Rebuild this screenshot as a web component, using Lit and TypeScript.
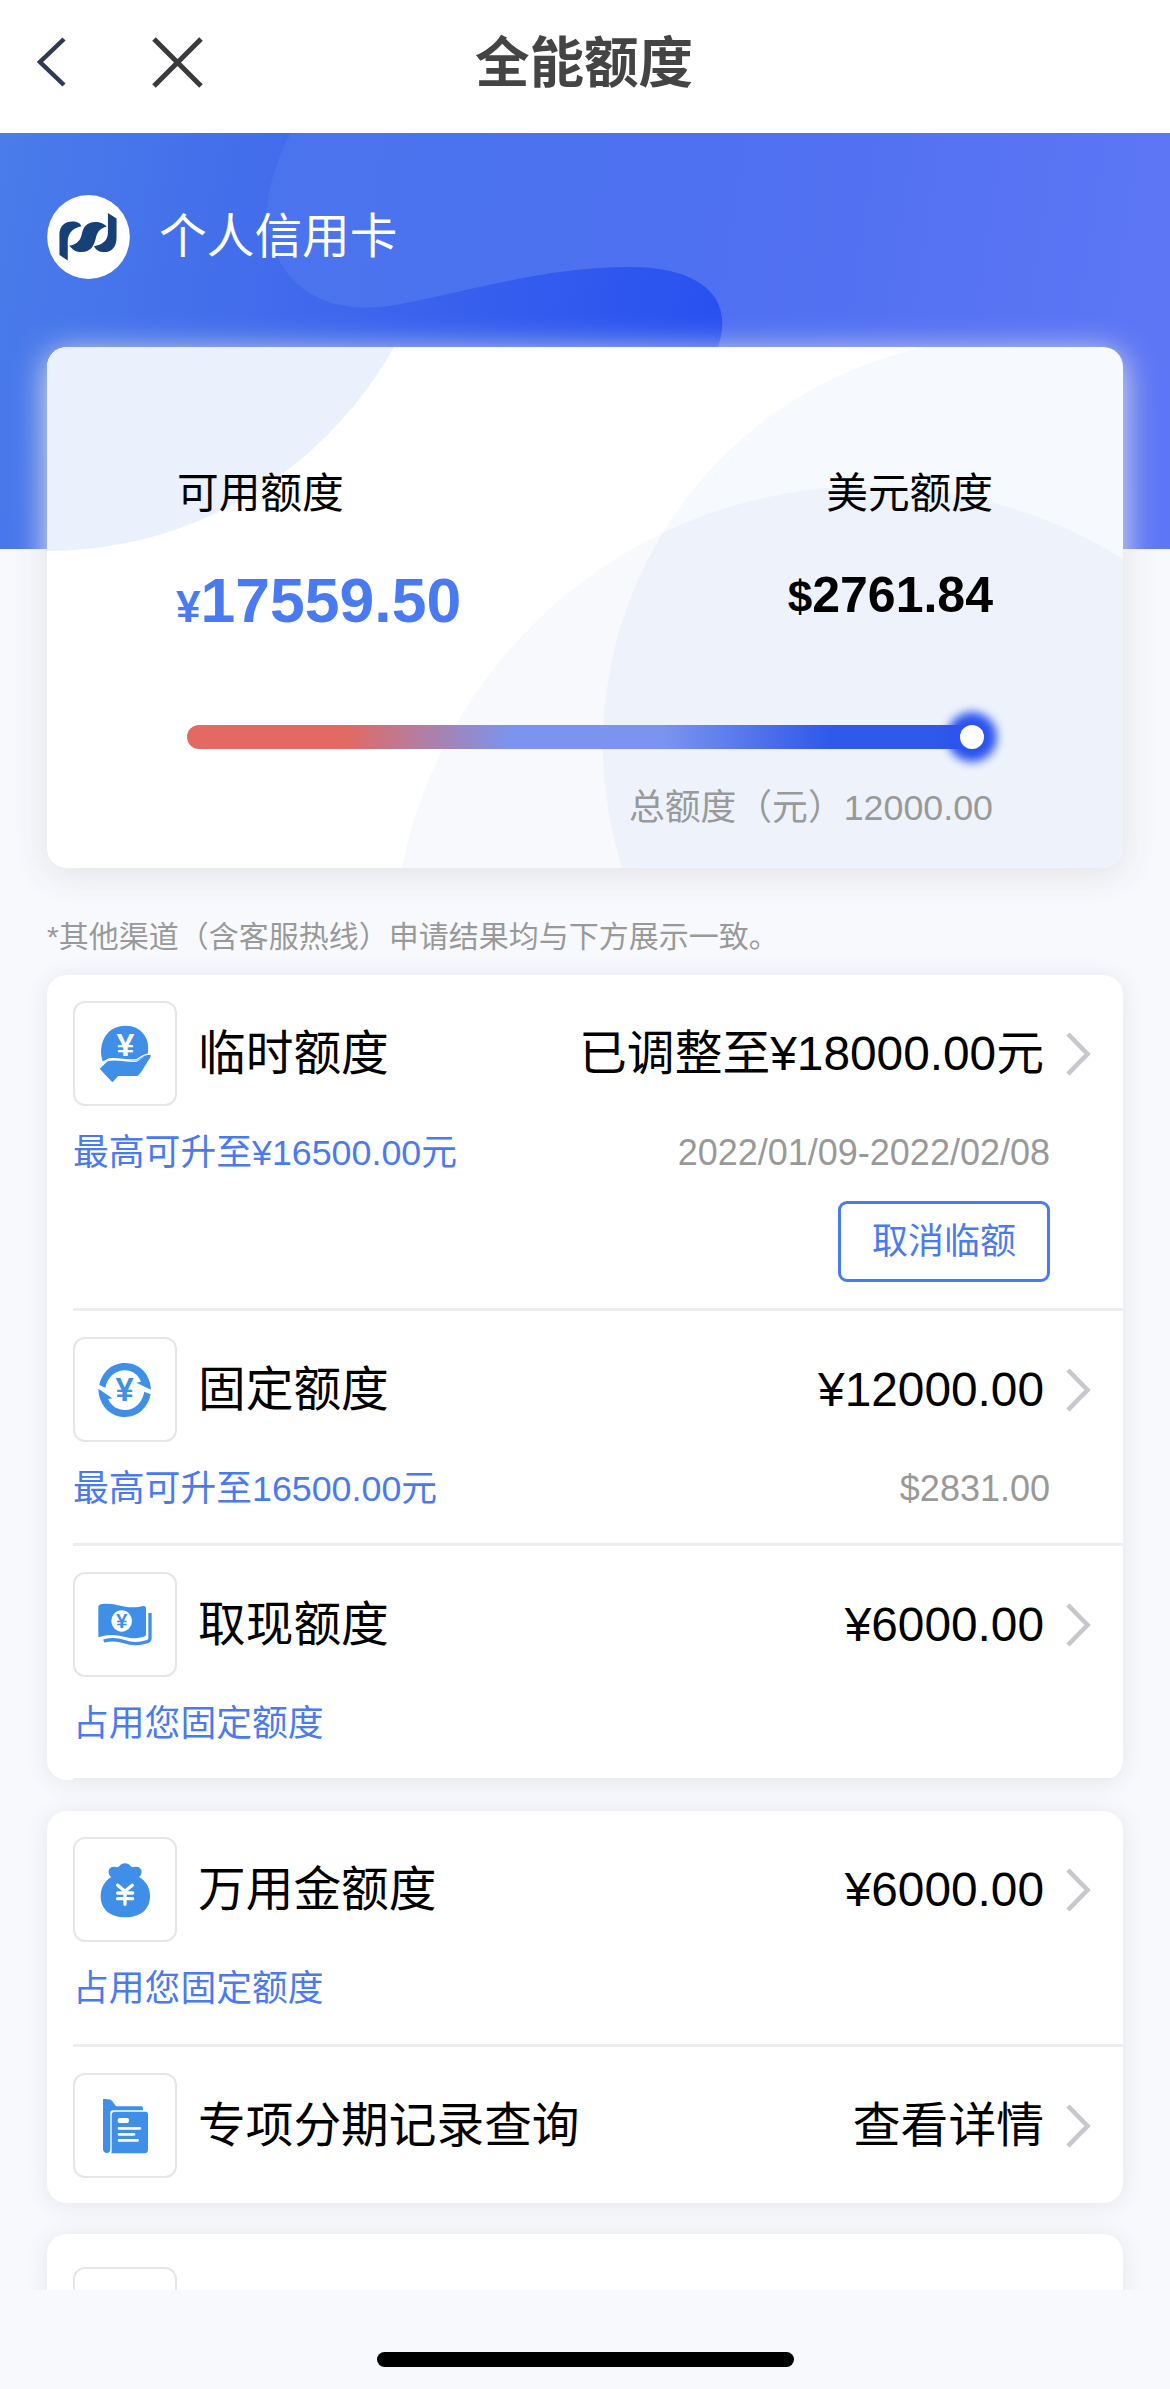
import { LitElement, html, css, svg, nothing } from "lit";
import { customElement, property } from "lit/decorators.js";

const BLUE = "#3f8fe8";

const yen = (x: number, y: number, size: number, fill: string) => svg`
  <text x=${x} y=${y} font-size=${size} font-weight="700" fill=${fill} text-anchor="middle"
    font-family="'Liberation Sans', Arial, sans-serif">¥</text>`;

const icons: Record<string, unknown> = {
  hand: html`<svg viewBox="0 -4 240 240" width="80" height="80">
    <path fill=${BLUE} d="M54 140C36 90 62 31 121 31C171 31 194 71 189 106C189 113 187 119 184 121C172 120 166 136 150 136C120 136 90 126 70 133C65 135 60 140 54 140Z"/>
    <path fill=${BLUE} d="M44 160C52 155 60 144 68 138C90 132 120 140 148 140C165 140 172 122 184 120L197 118C199 125 190 135 186 142C176 156 168 174 157 182L100 182L82 201Z"/>
    <path fill="none" stroke="#fff" stroke-width="4" stroke-linecap="round" d="M53 139C62 140 64 131 78 130C105 129 140 138 156 132C168 127 172 119 186 117"/>
    ${yen(121, 121, 96, "#fff")}
  </svg>`,
  cycle: html`<svg viewBox="0 0 240 240" width="80" height="80">
    <path fill=${BLUE} d="M43 105C51 67 80 39 120 39C163 39 196 72 198 119L154 98L168 95C159 73 142 61 120 61C91 61 67 82 61 113Z"/>
    <path fill=${BLUE} d="M197 133C189 172 160 201 120 201C77 201 41 166 40 116L82 145L69 147C79 168 97 180 120 180C150 180 172 157 178 125Z"/>
    ${yen(119, 154, 98, BLUE)}
  </svg>`,
  cash: html`<svg viewBox="0 702 240 240" width="80" height="80">
    <path fill=${BLUE} d="M40 768C40 762 46 760 53 759C90 755 110 769 140 769C155 769 165 767 175 765C180 764 183 767 183 772V850C183 854 181 856 177 857C160 861 142 864 125 859C105 853 80 849 57 854L40 859Z"/>
    <path fill="none" stroke=${BLUE} stroke-width="10" stroke-linejoin="round" d="M195 786V862C195 868 192 870 187 872C165 879 140 880 118 872C98 865 78 864 56 870"/>
    <ellipse cx="110" cy="810" rx="31" ry="32" fill="#fff"/>
    ${yen(110, 832, 62, BLUE)}
  </svg>`,
  bag: html`<svg viewBox="0 -1 240 240" width="80" height="80">
    <path fill=${BLUE} d="M79 80C66 70 68 47 89 49C96 50 99 52 103 48C109 36 131 36 137 48C141 52 145 50 151 49C172 47 175 70 162 80C182 91 195 112 195 137C195 177 167 201 121 201C75 201 47 177 47 137C47 112 60 91 79 80Z"/>
    <path fill="none" stroke="#fff" stroke-width="10" stroke-linecap="round" stroke-linejoin="round" d="M98 105L120 123L142 105M120 123V162M98 128H143M98 145H143"/>
  </svg>`,
  file: html`<svg viewBox="0 704 240 240" width="80" height="80">
    <path fill=${BLUE} d="M54 744C65 742 77 744 82 750L93 765H170C173 765 174 768 174 777H84C79 777 76 780 76 785V892C76 901 72 905 66 905C58 905 54 900 54 893Z"/>
    <path fill=${BLUE} d="M80 792C80 784 84 781 90 781H182C187 781 189 784 189 789V896C189 902 185 906 179 906H79Q81 901 80 892Z"/>
    <path fill="none" stroke="#fff" stroke-width="8" stroke-linecap="round" d="M102 831H165M102 849H147M102 867H158"/>
    <rect x="98" y="800" width="34" height="15" rx="6" fill="#fff"/>
  </svg>`,
};

interface Row {
  icon?: string;
  label?: string;
  value?: string;
  hint?: string;
  note?: string;
  action?: string;
}

const groups: Row[][] = [
  [
    {
      icon: "hand",
      label: "临时额度",
      value: "已调整至¥18000.00元",
      hint: "最高可升至¥16500.00元",
      note: "2022/01/09-2022/02/08",
      action: "取消临额",
    },
    { icon: "cycle", label: "固定额度", value: "¥12000.00", hint: "最高可升至16500.00元", note: "$2831.00" },
    { icon: "cash", label: "取现额度", value: "¥6000.00", hint: "占用您固定额度" },
  ],
  [
    { icon: "bag", label: "万用金额度", value: "¥6000.00", hint: "占用您固定额度" },
    { icon: "file", label: "专项分期记录查询", value: "查看详情" },
  ],
];

@customElement("limit-row")
class LimitRow extends LitElement {
  @property({ attribute: false }) row: Row = {};

  static styles = css`
    :host {
      display: block;
      margin-left: 26px;
      padding-top: 26px;
      box-sizing: border-box;
    }
    .main {
      display: flex;
      align-items: center;
      height: 105px;
      padding-right: 29px;
    }
    .icon {
      box-sizing: border-box;
      width: 104px;
      height: 105px;
      flex: none;
      border: 2px solid #e6e6e8;
      border-radius: 12px;
      display: flex;
      align-items: center;
      justify-content: center;
    }
    .icon svg {
      display: block;
    }
    .label {
      margin-left: 21px;
      padding-top: 1px;
      font-size: 47.7px;
      line-height: 60px;
      flex: 1;
      white-space: nowrap;
    }
    .value {
      font-size: 47.8px;
      line-height: 60px;
      padding-top: 1px;
      white-space: nowrap;
      margin-right: 18px;
    }
    .chevron {
      display: block;
      flex: none;
    }
    .sub {
      display: flex;
      justify-content: space-between;
      padding-right: 73px;
      margin-top: 22px;
      height: 50px;
      line-height: 50px;
      font-size: 35.8px;
      white-space: nowrap;
    }
    .hint {
      color: #4a7af0;
    }
    .note {
      color: #999;
      font-size: 36px;
    }
    .action {
      display: flex;
      justify-content: flex-end;
      padding-right: 73px;
      margin-top: 23px;
    }
    .button {
      box-sizing: border-box;
      width: 212px;
      height: 81px;
      border: 3px solid #4a7af0;
      border-radius: 9px;
      color: #4a7af0;
      font-size: 36px;
      line-height: 75px;
      text-align: center;
    }
  `;

  render() {
    const r = this.row;
    return html`
      <div class="main">
        <div class="icon">${r.icon ? icons[r.icon] : nothing}</div>
        ${r.label
          ? html`<div class="label">${r.label}</div>
              <div class="value">${r.value}</div>
              <svg class="chevron" width="32" height="50" viewBox="0 0 32 50">
                <path d="M6 5L25.500 25L6 45" fill="none" stroke="#c7c7cc" stroke-width="4.600" />
              </svg>`
          : nothing}
      </div>
      ${r.hint
        ? html`<div class="sub"><span class="hint">${r.hint}</span><span class="note">${r.note ?? nothing}</span></div>`
        : nothing}
      ${r.action ? html`<div class="action"><div class="button">${r.action}</div></div>` : nothing}
    `;
  }
}

@customElement("app-root")
class AppRoot extends LitElement {
  static styles = css`
    :host {
      display: block;
      width: 1170px;
      height: 2389px;
      overflow: hidden;
      background: #f8f9fd;
      color: #000;
      font-family: "Liberation Sans", "Noto Sans CJK SC", sans-serif;
    }
    .nav {
      display: grid;
      grid-template-columns: 240px 1fr 240px;
      height: 133px;
      background: #fff;
      padding-bottom: 9px;
      box-sizing: border-box;
      align-items: center;
    }
    .nav svg {
      display: block;
    }
    .title {
      text-align: center;
      font-size: 54.5px;
      line-height: 80px;
      padding-top: 3px;
      margin-right: 2px;
      font-weight: 700;
      color: #444;
    }
    .scroll {
      height: 2157px;
      overflow: hidden;
    }
    .banner {
      height: 416px;
      position: relative;
    }
    .art {
      position: absolute;
      inset: 0;
    }
    .user {
      position: relative;
      display: flex;
      align-items: center;
      gap: 29px;
      padding: 62px 0 0 47px;
      color: #fff;
      font-size: 47.7px;
      line-height: 84px;
    }
    .user svg {
      display: block;
    }
    .card {
      position: relative;
      margin: -202px 47px 0;
      height: 521px;
      border-radius: 20px;
      box-shadow: 0 6px 32px 2px rgba(226, 227, 231, 0.97);
      background: #fff;
      overflow: hidden;
      box-sizing: border-box;
      padding: 120px 130px 0;
    }
    .cardbg {
      position: absolute;
      left: 0;
      top: 0;
    }
    .body {
      position: relative;
    }
    .heads,
    .amounts {
      display: flex;
      justify-content: space-between;
    }
    .heads {
      font-size: 41.7px;
      line-height: 54px;
    }
    .amounts {
      font-weight: 700;
      height: 100px;
      margin-top: 29px;
      line-height: 100px;
    }
    .cny {
      color: #4a7af0;
      font-size: 62.5px;
      margin-left: -1px;
    }
    .cny small {
      font-size: 44px;
    }
    .usd {
      font-size: 50px;
      line-height: 90px;
    }
    .usd small {
      font-size: 44px;
    }
    .track {
      margin: 75px 13px 0 10px;
      height: 24px;
      border-radius: 12px;
      background: linear-gradient(90deg, #e26a62 20%, #7b94ef 41%, #7b94ef 60%, #3058ea 81%);
      display: flex;
      justify-content: flex-end;
    }
    .dot {
      width: 24px;
      height: 24px;
      border-radius: 50%;
      background: #fff;
      margin-right: -4px;
      box-shadow: 0 0 10px 13px #2c54ee;
    }
    .total {
      margin-top: 34px;
      font-size: 35.8px;
      line-height: 50px;
      text-align: right;
      color: #999;
    }
    .tip {
      margin: 48px 47px 0;
      height: 59px;
      line-height: 42px;
      font-size: 30px;
      color: #999;
      white-space: nowrap;
    }
    .group {
      margin: 0 47px 31px;
      border-radius: 20px;
      background: #fff;
      box-shadow: 0 2px 22px #e4e5ea;
    }
    .row {
      height: 235px;
    }
    .row.tall {
      height: 333px;
    }
    .row.brief {
      height: 233px;
    }
    .row.short {
      height: 159px;
    }
    .row + .row::before {
      content: "";
      display: block;
      height: 3px;
      margin-left: 26px;
      background: #ededef;
    }
    .group.ruled {
      padding-bottom: 2px;
      background: linear-gradient(#ededf0, #ededf0) 26px 100% / 1050px 2px no-repeat #fff;
    }
    .peek {
      padding-top: 7px;
    }
    .foot {
      display: flex;
      justify-content: center;
      padding-top: 62px;
    }
    .bar {
      width: 417px;
      height: 15px;
      border-radius: 8px;
      background: #000;
    }
  `;

  private rowClass(r: Row, groupIndex: number) {
    if (r.action) return "row tall";
    if (!r.hint) return "row short";
    return groupIndex === 0 ? "row" : "row brief";
  }

  render() {
    return html`
      <div class="nav">
        <svg width="240" height="124" viewBox="0 0 240 124">
          <path d="M64 39L40 62L64 85" fill="none" stroke="#2f3a52" stroke-width="4.500" />
          <path d="M154 39L201 86M201 39L154 86" fill="none" stroke="#3a3a3c" stroke-width="5" />
        </svg>
        <div class="title">全能额度</div>
      </div>
      <div class="scroll">
        <div class="banner">
          <svg class="art" width="1170" height="416" viewBox="0 0 1170 416">
            <defs>
              <linearGradient id="base" gradientUnits="userSpaceOnUse" x1="0" y1="20" x2="730" y2="160">
                <stop offset="0" stop-color="#4a7cea" />
                <stop offset=".4" stop-color="#416bec" />
                <stop offset="1" stop-color="#2850f0" />
              </linearGradient>
              <linearGradient id="wave" gradientUnits="userSpaceOnUse" x1="266" y1="60" x2="1170" y2="200">
                <stop offset="0" stop-color="#4a74ed" />
                <stop offset=".5" stop-color="#4e70f1" />
                <stop offset="1" stop-color="#5d76f5" />
              </linearGradient>
            </defs>
            <rect width="1170" height="416" fill="url(#base)" />
            <path
              fill="url(#wave)"
              d="M291 0C268 42 258 90 277 124C300 168 345 182 400 171C470 158 545 134 630 134C697 134 739 162 716 220V416H1170V0Z"
            />
          </svg>
          <div class="user">
            <svg width="83" height="84" viewBox="51 45 249 253">
              <ellipse cx="175.500" cy="171.500" rx="124.500" ry="126.500" fill="#fff" />
              <path fill="#173f78" d="M88 226V163C88 138 105 125 127 125C141 125 151 130 154 139C132 143 113 158 113 184V242Z" />
              <path
                fill="#173f78"
                d="M118 197C137 196 151 184 155 164C159 141 171 126 196 126C211 126 224 131 230 141C211 145 202 155 197 177C191 203 178 217 155 217C139 217 126 210 118 197Z"
              />
              <path fill="#173f78" d="M234 99L260 116V172C260 201 246 217 222 217C207 217 198 210 192 199C216 196 234 183 234 159Z" />
            </svg>
            <span>个人信用卡</span>
          </div>
        </div>
        <div class="card">
          <svg class="cardbg" width="1076" height="521" viewBox="0 0 1076 521">
            <circle cx="0" cy="-193" r="397" fill="#eaf1fc" />
            <circle cx="963" cy="398" r="407" fill="#4a86dc" fill-opacity=".05" />
            <circle cx="822" cy="616" r="477" fill="#4a7fdc" fill-opacity=".045" />
          </svg>
          <div class="body">
            <div class="heads"><span>可用额度</span><span>美元额度</span></div>
            <div class="amounts">
              <span class="cny"><small>¥</small>17559.50</span>
              <span class="usd"><small>$</small>2761.84</span>
            </div>
            <div class="track"><div class="dot"></div></div>
            <div class="total">总额度（元）12000.00</div>
          </div>
        </div>
        <div class="tip">*其他渠道（含客服热线）申请结果均与下方展示一致。</div>
        ${groups.map(
          (g, i) => html`<div class=${i === 0 ? "group ruled" : "group"}>
            ${g.map((r) => html`<div class=${this.rowClass(r, i)}><limit-row .row=${r}></limit-row></div>`)}
          </div>`,
        )}
        <div class="group peek"><div class="row"><limit-row></limit-row></div></div>
      </div>
      <div class="foot"><div class="bar"></div></div>
    `;
  }
}
